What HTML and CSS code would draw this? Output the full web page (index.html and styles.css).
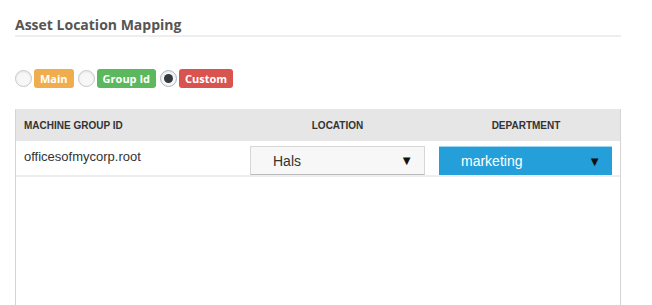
FILE: index.html
```html
<!DOCTYPE html>
<html>
<head>
  <title>Asset Location Mapping</title>
  <meta charset="UTF-8">
  <link rel="stylesheet" href="styles.css">
</head>
<body>
<div class="panel">
  <h2 class="panel-title">Asset Location Mapping</h2>

  <div class="mode-picker">
    <label class="mode">
      <span class="radio"></span>
      <span class="badge badge-main">Main</span>
    </label>
    <label class="mode">
      <span class="radio"></span>
      <span class="badge badge-group">Group Id</span>
    </label>
    <label class="mode">
      <span class="radio checked"></span>
      <span class="badge badge-custom">Custom</span>
    </label>
  </div>

  <div class="grid">
    <div class="grid-head">
      <div class="cell cell-id">MACHINE GROUP ID</div>
      <div class="cell cell-loc">LOCATION</div>
      <div class="cell cell-dept">DEPARTMENT</div>
    </div>
    <div class="grid-row">
      <div class="cell cell-id">officesofmycorp.root</div>
      <div class="cell cell-loc">
        <div class="select select-plain"><span>Hals</span><span class="arrow">&#9660;</span></div>
      </div>
      <div class="cell cell-dept">
        <div class="select select-blue"><span>marketing</span><span class="arrow">&#9660;</span></div>
      </div>
    </div>
    <div class="grid-body"></div>
  </div>
</div>
</body>
</html>
```

FILE: styles.css
```css
body {
  margin: 0;
  background-color: #fff;
  font-family: "Liberation Sans", Arial, sans-serif;
}

.panel {
  padding: 15px 31px 0 15px;
}

.panel-title {
  margin: 0;
  padding-bottom: 1px;
  font-family: "Open Sans", sans-serif;
  font-size: 14px;
  font-weight: 700;
  line-height: 19px;
  color: #555;
  border-bottom: 2px solid #eee;
}

.mode-picker {
  display: flex;
  align-items: center;
  gap: 4px;
  margin-top: 32px;
}

.mode {
  display: flex;
  align-items: center;
  gap: 2px;
}

.radio {
  width: 15px;
  height: 15px;
  border: 1px solid #c8c8c8;
  border-radius: 50%;
  background-color: #f7f7f7;
  box-shadow: inset 0 1px 2px rgba(0, 0, 0, 0.08);
  position: relative;
}

.radio.checked {
  border-color: #a9b4c2;
}

.radio.checked::after {
  content: "";
  position: absolute;
  top: 3px;
  left: 3px;
  width: 9px;
  height: 9px;
  border-radius: 50%;
  background-color: #333a40;
}

.badge {
  display: inline-block;
  height: 19px;
  padding: 0 6px;
  border-radius: 3px;
  font-family: "Open Sans", sans-serif;
  font-size: 11px;
  font-weight: 700;
  line-height: 19px;
  color: #fff;
}

.badge-main { background-color: #f0ad4e; }
.badge-group { background-color: #5cb85c; }
.badge-custom { background-color: #d9534f; }

.grid {
  margin-top: 21px;
  border-left: 1px solid #d4d4d4;
  border-right: 1px solid #d4d4d4;
  border-top: 1px solid #e6e6e6;
}

.grid-head,
.grid-row {
  display: grid;
  grid-template-columns: 227px 189px 1fr;
}

.grid-head {
  background-color: #e6e6e6;
  height: 31px;
  align-items: center;
  font-size: 10px;
  font-weight: 700;
  color: #333;
}

.grid-head .cell-id {
  padding-left: 8px;
}

.grid-head .cell-loc,
.grid-head .cell-dept {
  text-align: center;
}

.grid-row {
  height: 34px;
  align-items: end;
  border-bottom: 2px solid #eee;
}

.grid-row .cell-id {
  align-self: center;
  padding-left: 8px;
  padding-bottom: 3px;
  font-size: 13px;
  color: #333;
}

.grid-row .cell-loc {
  padding: 0 7px;
}

.grid-row .cell-dept {
  padding: 0 8px 0 7px;
}

.select {
  display: flex;
  justify-content: space-between;
  align-items: center;
  box-sizing: border-box;
  height: 29px;
  padding: 0 11px 0 22px;
  font-size: 14px;
}

.select-plain {
  background-color: #f7f7f7;
  border: 1px solid #d6d6d6;
  border-bottom-color: #bbb;
  color: #333;
}

.select-blue {
  background-color: #249fd9;
  border-top: 1px solid #9fd5ef;
  color: #fff;
}

.select .arrow {
  font-size: 13px;
  color: #111;
}

.grid-body {
  height: 140px;
}
```
